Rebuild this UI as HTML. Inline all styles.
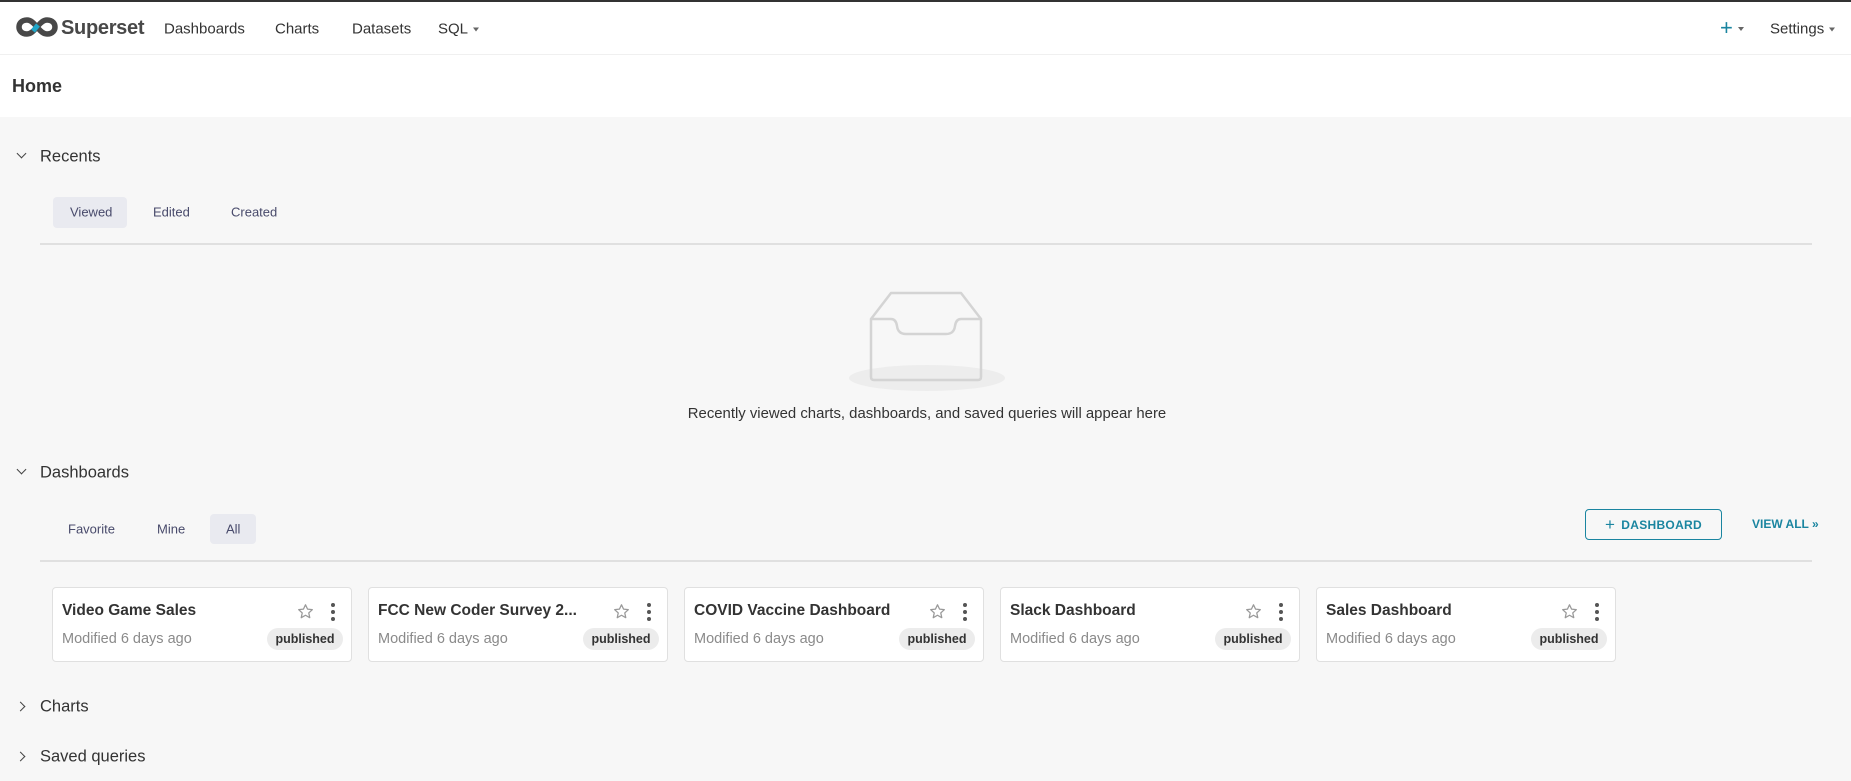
<!DOCTYPE html>
<html><head><meta charset="utf-8"><style>
*{box-sizing:border-box;margin:0;padding:0}
body{width:1851px;height:781px;overflow:hidden;background:#f7f7f7;font-family:"Liberation Sans",sans-serif;color:#333;position:relative}
.a{position:absolute;white-space:nowrap}
.nav{position:absolute;left:0;top:0;width:1851px;height:55px;background:#fff;border-top:2px solid #323232;border-bottom:1px solid #f0f0f0}
.hdr{position:absolute;left:0;top:55px;width:1851px;height:62px;background:#fff}
.ni{font-size:15px;color:#333;transform:translateY(-50%)}
.car{display:inline-block;width:0;height:0;border-left:3px solid transparent;border-right:3px solid transparent;border-top:4px solid #666;vertical-align:middle;margin-left:5px}
.sec{font-size:16.5px;color:#333;transform:translateY(-50%)}
.chev{position:absolute;width:7px;height:7px;border-right:1.3px solid #444;border-bottom:1.3px solid #444}
.tab{font-size:13px;color:#484a6b;transform:translateY(-50%)}
.pill{position:absolute;background:#e9eaf0;border-radius:4px}
.div{position:absolute;left:40px;width:1772px;height:2px;background:#e0e0e0}
.card{position:absolute;top:587px;width:300px;height:75px;background:#fff;border:1px solid #e0e0e0;border-radius:4px}
.card .t{position:absolute;left:9px;top:14px;font-size:15.5px;font-weight:bold;color:#333}
.card .s{position:absolute;left:9px;top:43px;font-size:14.5px;color:#8a8a8a}
.card .b{position:absolute;right:8px;top:40px;width:76px;height:22px;border-radius:11px;background:#ececec;font-size:12.5px;font-weight:bold;color:#333;text-align:center;line-height:22px}
.card svg{position:absolute}
</style></head><body>
<div class="nav"></div>
<svg class="a" style="left:16px;top:17px" width="42" height="20" viewBox="0 0 42 20"><path d="M11 3 C5 3 3 7 3 10 C3 13 5 17 11 17 C16 17 19 12 21 10 C23 8 26 3 31 3 C37 3 39 7 39 10 C39 13 37 17 31 17 C26 17 23 12 21 10 C19 8 16 3 11 3 Z" fill="none" stroke="#484848" stroke-width="5.5"/><path d="M17 14 L22 8" stroke="#20a7c9" stroke-width="5"/></svg>
<div class="a" style="left:61px;top:17px;font-size:20px;font-weight:bold;color:#484848;letter-spacing:-0.3px">Superset</div>
<div class="a ni" style="left:164px;top:29px">Dashboards</div>
<div class="a ni" style="left:275px;top:29px">Charts</div>
<div class="a ni" style="left:352px;top:29px">Datasets</div>
<div class="a ni" style="left:438px;top:29px">SQL<span class="car"></span></div>
<div class="a ni" style="left:1720px;top:28px;color:#1a85a0;font-size:22px">+<span class="car"></span></div>
<div class="a ni" style="left:1770px;top:29px">Settings<span class="car"></span></div>
<div class="hdr"></div>
<div class="a" style="left:12px;top:76px;font-size:18px;font-weight:bold;color:#333">Home</div>

<div class="chev" style="left:18px;top:150px;transform:rotate(45deg)"></div>
<div class="a sec" style="left:40px;top:157px">Recents</div>
<div class="pill" style="left:53px;top:197px;width:74px;height:31px"></div>
<div class="a tab" style="left:70px;top:212px">Viewed</div>
<div class="a tab" style="left:153px;top:212px">Edited</div>
<div class="a tab" style="left:231px;top:212px">Created</div>
<div class="div" style="top:243px"></div>

<svg class="a" style="left:846px;top:290px" width="162" height="106" viewBox="0 0 162 106"><ellipse cx="81" cy="88" rx="78" ry="13" fill="#ededed"/><path d="M25 29 L45 3 L115 3 L135 29" fill="none" stroke="#d4d4d4" stroke-width="2.5" stroke-linejoin="round"/><path d="M25 29 L25 87 Q25 90 28 90 L132 90 Q135 90 135 87 L135 29 L115 29 Q110 29 109 36 Q108 44 100 44 L60 44 Q52 44 51 36 Q50 29 45 29 Z" fill="none" stroke="#d4d4d4" stroke-width="2.5" stroke-linejoin="round"/></svg>
<div class="a" style="left:927px;top:406px;transform:translateX(-50%);font-size:14.9px;color:#333">Recently viewed charts, dashboards, and saved queries will appear here</div>

<div class="chev" style="left:18px;top:466px;transform:rotate(45deg)"></div>
<div class="a sec" style="left:40px;top:473px">Dashboards</div>
<div class="pill" style="left:210px;top:514px;width:46px;height:30px"></div>
<div class="a tab" style="left:68px;top:529px">Favorite</div>
<div class="a tab" style="left:157px;top:529px">Mine</div>
<div class="a tab" style="left:226px;top:529px">All</div>
<div class="a" style="left:1585px;top:509px;width:137px;height:31px;border:1px solid #1a85a0;border-radius:4px;color:#1a85a0;font-size:12px;font-weight:bold;text-align:center;line-height:29px;letter-spacing:0.3px"><span style="font-size:17px;font-weight:normal;vertical-align:-1px;margin-right:6px">+</span>DASHBOARD</div>
<div class="a" style="left:1752px;top:517px;color:#1a85a0;font-size:12px;font-weight:bold">VIEW ALL »</div>
<div class="div" style="top:560px"></div>

<div class="card" style="left:52px"><div class="t">Video Game Sales</div><div class="s">Modified 6 days ago</div><div class="b">published</div>
<svg style="right:37px;top:15px" width="17" height="17" viewBox="0 0 24 24"><path d="M12 2.5l2.9 6.2 6.7.7-5 4.6 1.4 6.7L12 17.3l-6 3.4 1.4-6.7-5-4.6 6.7-.7z" fill="none" stroke="#999" stroke-width="1.8" stroke-linejoin="round"/></svg>
<svg style="right:15px;top:14px" width="6" height="20"><circle cx="3" cy="3" r="2" fill="#555"/><circle cx="3" cy="10" r="2" fill="#555"/><circle cx="3" cy="17" r="2" fill="#555"/></svg></div>
<div class="card" style="left:368px"><div class="t">FCC New Coder Survey 2...</div><div class="s">Modified 6 days ago</div><div class="b">published</div>
<svg style="right:37px;top:15px" width="17" height="17" viewBox="0 0 24 24"><path d="M12 2.5l2.9 6.2 6.7.7-5 4.6 1.4 6.7L12 17.3l-6 3.4 1.4-6.7-5-4.6 6.7-.7z" fill="none" stroke="#999" stroke-width="1.8" stroke-linejoin="round"/></svg>
<svg style="right:15px;top:14px" width="6" height="20"><circle cx="3" cy="3" r="2" fill="#555"/><circle cx="3" cy="10" r="2" fill="#555"/><circle cx="3" cy="17" r="2" fill="#555"/></svg></div>
<div class="card" style="left:684px"><div class="t">COVID Vaccine Dashboard</div><div class="s">Modified 6 days ago</div><div class="b">published</div>
<svg style="right:37px;top:15px" width="17" height="17" viewBox="0 0 24 24"><path d="M12 2.5l2.9 6.2 6.7.7-5 4.6 1.4 6.7L12 17.3l-6 3.4 1.4-6.7-5-4.6 6.7-.7z" fill="none" stroke="#999" stroke-width="1.8" stroke-linejoin="round"/></svg>
<svg style="right:15px;top:14px" width="6" height="20"><circle cx="3" cy="3" r="2" fill="#555"/><circle cx="3" cy="10" r="2" fill="#555"/><circle cx="3" cy="17" r="2" fill="#555"/></svg></div>
<div class="card" style="left:1000px"><div class="t">Slack Dashboard</div><div class="s">Modified 6 days ago</div><div class="b">published</div>
<svg style="right:37px;top:15px" width="17" height="17" viewBox="0 0 24 24"><path d="M12 2.5l2.9 6.2 6.7.7-5 4.6 1.4 6.7L12 17.3l-6 3.4 1.4-6.7-5-4.6 6.7-.7z" fill="none" stroke="#999" stroke-width="1.8" stroke-linejoin="round"/></svg>
<svg style="right:15px;top:14px" width="6" height="20"><circle cx="3" cy="3" r="2" fill="#555"/><circle cx="3" cy="10" r="2" fill="#555"/><circle cx="3" cy="17" r="2" fill="#555"/></svg></div>
<div class="card" style="left:1316px"><div class="t">Sales Dashboard</div><div class="s">Modified 6 days ago</div><div class="b">published</div>
<svg style="right:37px;top:15px" width="17" height="17" viewBox="0 0 24 24"><path d="M12 2.5l2.9 6.2 6.7.7-5 4.6 1.4 6.7L12 17.3l-6 3.4 1.4-6.7-5-4.6 6.7-.7z" fill="none" stroke="#999" stroke-width="1.8" stroke-linejoin="round"/></svg>
<svg style="right:15px;top:14px" width="6" height="20"><circle cx="3" cy="3" r="2" fill="#555"/><circle cx="3" cy="10" r="2" fill="#555"/><circle cx="3" cy="17" r="2" fill="#555"/></svg></div>

<div class="chev" style="left:17px;top:703px;transform:rotate(-45deg)"></div>
<div class="a sec" style="left:40px;top:707px">Charts</div>
<div class="chev" style="left:17px;top:753px;transform:rotate(-45deg)"></div>
<div class="a sec" style="left:40px;top:757px">Saved queries</div>
</body></html>
